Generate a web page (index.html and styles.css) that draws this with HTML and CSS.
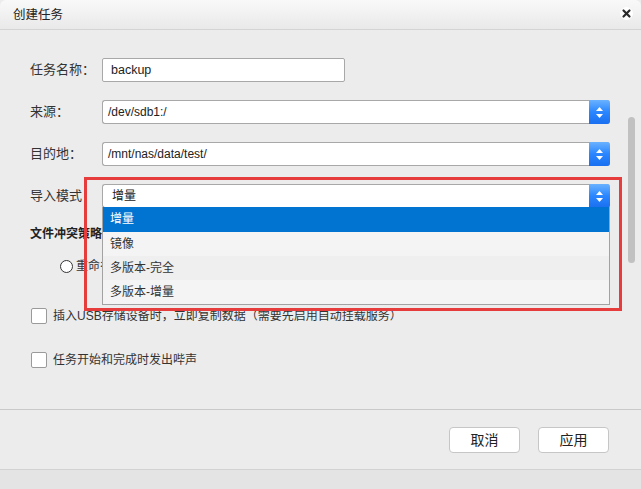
FILE: index.html
```html
<!DOCTYPE html>
<html>
<head>
<meta charset="utf-8">
<link rel="stylesheet" href="styles.css">
</head>
<body>
<div class="window">
  <div class="titlebar">
    <span class="title">创建任务</span>
    <span class="close">
      <svg width="13" height="13" viewBox="0 0 13 13"><path d="M3.5 3.5 L9.5 9.5 M9.5 3.5 L3.5 9.5" stroke="#2b2b2b" stroke-width="2.2" stroke-linecap="round"/></svg>
    </span>
  </div>
  <div class="content">
    <div class="form-row">
      <label class="label">任务名称：</label>
      <div class="input">backup</div>
    </div>
    <div class="form-row">
      <label class="label">来源：</label>
      <div class="select"><span class="select-text">/dev/sdb1:/</span><span class="spin"><svg width="21" height="23" viewBox="0 0 21 23"><path d="M7 10 L10.5 6 L14 10 Z M7 13 L14 13 L10.5 17 Z" fill="#fff"/></svg></span></div>
    </div>
    <div class="form-row">
      <label class="label">目的地：</label>
      <div class="select"><span class="select-text">/mnt/nas/data/test/</span><span class="spin"><svg width="21" height="23" viewBox="0 0 21 23"><path d="M7 10 L10.5 6 L14 10 Z M7 13 L14 13 L10.5 17 Z" fill="#fff"/></svg></span></div>
    </div>
    <div class="form-row">
      <label class="label">导入模式</label>
      <div class="select"><span class="select-text mode">增量</span><span class="spin"><svg width="21" height="23" viewBox="0 0 21 23"><path d="M7 10 L10.5 6 L14 10 Z M7 13 L14 13 L10.5 17 Z" fill="#fff"/></svg></span></div>
    </div>
    <div class="section-title">文件冲突策略</div>
    <div class="radio-row"><span class="radio"></span><span>重命名</span></div>
    <div class="check-row first"><span class="checkbox"></span><span>插入USB存储设备时，立即复制数据（需要先启用自动挂载服务）</span></div>
    <div class="check-row second"><span class="checkbox"></span><span>任务开始和完成时发出哔声</span></div>
  </div>
  <div class="footer">
    <button class="btn">取消</button>
    <button class="btn">应用</button>
  </div>
  <div class="bottom"></div>

  <div class="scroll-thumb"></div>

  <ul class="dropdown">
    <li class="opt selected">增量</li>
    <li class="opt">镜像</li>
    <li class="opt alt">多版本-完全</li>
    <li class="opt">多版本-增量</li>
  </ul>
  <div class="highlight"></div>
</div>
</body>
</html>
```

FILE: styles.css
```css
* { box-sizing: border-box; }
html, body {
  margin: 0;
  padding: 0;
  width: 641px;
  height: 489px;
  overflow: hidden;
  background: #ececec;
  font-family: "Liberation Sans", "Noto Sans CJK SC", sans-serif;
  font-size: 12px;
  color: #333;
}
.window {
  position: relative;
  width: 641px;
  height: 489px;
  background: #ececec;
  border-top-left-radius: 6px;
  border-top-right-radius: 6px;
  overflow: hidden;
}
.titlebar {
  height: 30px;
  background: linear-gradient(#f9f9f9, #e9e9e9);
  border-bottom: 1px solid #d4d4d4;
  display: flex;
  align-items: center;
  justify-content: space-between;
  padding: 0 8px 0 13px;
}
.title {
  font-size: 12.5px;
  color: #222;
  line-height: 16px;
  margin-top: 1px;
}
.close {
  width: 13px;
  height: 13px;
  border-radius: 50%;
  background: #fff;
  display: flex;
  margin-top: -3px;
}
.content {
  height: 380px;
  border-bottom: 1px solid #c9c9c9;
  padding: 28px 0 0 30px;
  display: flex;
  flex-direction: column;
}
.form-row {
  display: flex;
  align-items: center;
  height: 24px;
  margin-bottom: 18px;
}
.label {
  width: 72px;
  line-height: 16px;
  font-size: 13px;
}
.input {
  width: 243px;
  height: 24px;
  background: #fff;
  border: 1px solid #a8a8a8;
  border-radius: 2px;
  padding-left: 8px;
  line-height: 22px;
  font-size: 12.5px;
  color: #222;
}
.select {
  width: 508px;
  height: 24px;
  background: #fff;
  border: 1px solid #a8a8a8;
  border-right: none;
  border-radius: 3px;
  display: flex;
  align-items: center;
  justify-content: space-between;
}
.select-text {
  padding-left: 5px;
  line-height: 16px;
  color: #222;
  font-size: 12px;
}
.select-text.mode { padding-left: 9px; }
.spin {
  width: 21px;
  height: 24px;
  margin-top: -1px;
  margin-bottom: -1px;
  background: linear-gradient(#6ab2ff, #2a86ff 50%, #1a6ff0);
  border-radius: 0 3px 3px 0;
  display: flex;
  align-items: center;
}
.section-title {
  margin-top: -2px;
  font-weight: bold;
  color: #222;
  line-height: 20px;
  font-size: 12px;
}
.radio-row {
  display: flex;
  align-items: center;
  margin-top: 12px;
  margin-left: 30px;
  height: 20px;
  line-height: 16px;
}
.radio {
  width: 13px;
  height: 13px;
  border: 1px solid #333;
  border-radius: 50%;
  background: #fff;
  margin-right: 3px;
}
.check-row {
  display: flex;
  align-items: center;
  height: 16px;
  line-height: 16px;
  margin-left: 1px;
}
.check-row.first { margin-top: 32px; }
.check-row.second { margin-top: 28px; }
.checkbox {
  width: 16px;
  height: 16px;
  background: #fff;
  border: 1px solid #9a9a9a;
  border-radius: 2px;
  margin-right: 6px;
  flex: none;
}
.footer {
  height: 60px;
  border-bottom: 1px solid #d2d2d2;
  display: flex;
  justify-content: flex-end;
  align-items: flex-start;
  padding: 17px 32px 0 0;
  gap: 18px;
}
.btn {
  width: 71px;
  height: 26px;
  background: #fff;
  border: 1px solid #c6c6c6;
  border-radius: 4px;
  font-family: "Liberation Sans", "Noto Sans CJK SC", sans-serif;
  font-size: 14px;
  color: #222;
  padding: 0;
  line-height: 24px;
}
.bottom {
  height: 19px;
  background: #e4e4e4;
}
.scroll-thumb {
  position: absolute;
  left: 628px;
  top: 117px;
  width: 7px;
  height: 146px;
  border-radius: 4px;
  background: #c1c1c1;
}
.dropdown {
  position: absolute;
  left: 102px;
  top: 207px;
  width: 508px;
  height: 98px;
  margin: 0;
  padding: 0;
  list-style: none;
  border: 1px solid #a2a2a2;
  border-top: none;
  background: #f4f4f4;
  font-size: 12px;
}
.opt {
  height: 24px;
  line-height: 24px;
  padding-left: 7px;
  color: #333;
  background: #f4f4f4;
}
.opt.alt { background: #efefef; }
.opt.selected {
  background: #0074d0;
  color: #fff;
  height: 25px;
  line-height: 25px;
}
.highlight {
  position: absolute;
  left: 84px;
  top: 177px;
  width: 538px;
  height: 134px;
  border: 3px solid #e63c3c;
}
```
